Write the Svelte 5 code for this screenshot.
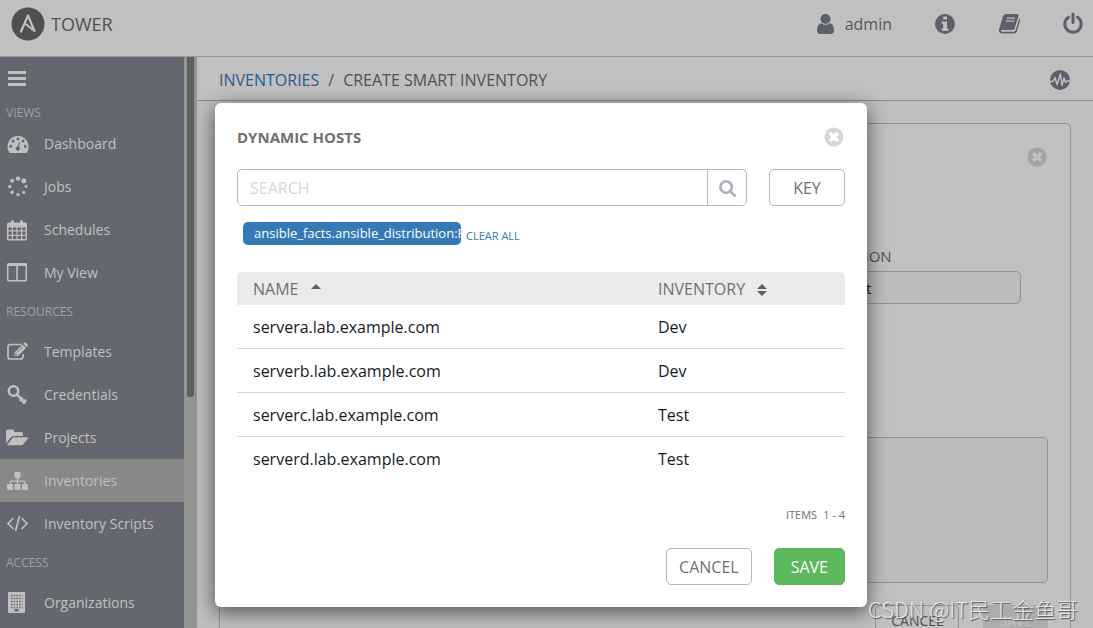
<script>
  const icons = {
    dashboard:
      '<path fill="currentColor" fill-rule="evenodd" d="M11 2A10.5 10.5 0 0 0 2.2 18.2Q2.5 19 3.4 19H18.6Q19.5 19 19.8 18.2A10.5 10.5 0 0 0 11 2ZM11 3.5a1.500 1.500 0 1 1 0 3a1.500 1.500 0 0 1 0-3ZM6 5.500a1.500 1.500 0 1 1 0 3a1.500 1.500 0 0 1 0-3ZM16 5.500a1.500 1.500 0 1 1 0 3a1.500 1.500 0 0 1 0-3ZM3.800 10.700a1.500 1.500 0 1 1 0 3a1.500 1.500 0 0 1 0-3ZM18.200 10.700a1.500 1.500 0 1 1 0 3a1.500 1.500 0 0 1 0-3ZM12 8L13 8.300L12 12.800A2.200 2.200 0 1 1 10.600 12.500Z"/>',
    jobs:
      '<g fill="currentColor"><circle cx="11" cy="1.6" r="2.2"/><circle cx="16.8" cy="3.8" r="2.5"/><circle cx="19" cy="9.5" r="1.4"/><circle cx="16.8" cy="15.3" r="1.6"/><circle cx="11" cy="17.6" r="1.7"/><circle cx="5.2" cy="15.3" r="1.8"/><circle cx="2.8" cy="9.5" r="1.7"/><circle cx="5.2" cy="3.800" r="2"/></g>',
    schedules:
      '<path fill="currentColor" fill-rule="evenodd" d="M2 2.500H4V1.500Q4 0 5.500 0T7 1.500V2.500H13V1.500Q13 0 14.500 0T16 1.500V2.500H18.500Q20 2.500 20 4V19Q20 20.500 18.500 20.500H1.500Q0 20.500 0 19V4Q0 2.500 2 2.500ZM1.500 7.500V10.200H4.800V7.500ZM6 7.500V10.200H9.400V7.500ZM10.600 7.500V10.200H14V7.500ZM15.200 7.500V10.200H18.500V7.500ZM1.500 11.500V14.700H4.800V11.500ZM6 11.500V14.700H9.400V11.500ZM10.600 11.500V14.700H14V11.500ZM15.200 11.500V14.700H18.500V11.500ZM1.500 16V19H4.800V16ZM6 16V19H9.400V16ZM10.600 16V19H14V16ZM15.200 16V19H18.500V16Z"/>',
    columns:
      '<path fill="currentColor" fill-rule="evenodd" d="M1.500 0H18.500Q20 0 20 1.500V17Q20 18.500 18.500 18.500H1.500Q0 18.500 0 17V1.500Q0 0 1.500 0ZM1.500 3V17H9.200V3ZM10.800 3V17H18.500V3Z"/>',
    templates:
      '<path fill="none" stroke="currentColor" stroke-width="1.700" d="M14.500 2.500H3.500Q1 2.500 1 5V14.500Q1 17 3.500 17H13.500Q16 17 16 14.500V12"/><path fill="currentColor" d="M7.500 10.500L15.500 2.500L19 6L11 14H7.500ZM16.300 1.700L17.500.700Q18.200.200 18.900.800L20.600 2.500Q21.200 3.200 20.600 4L19.800 5.200Z"/><path stroke="#64676f" stroke-width=".8" d="M10 10.500L15.500 5M8.700 11.500V12.800H10"/>',
    key:
      '<g fill="none" stroke="currentColor" stroke-width="2.600"><circle cx="6.500" cy="6" r="4.700"/><path d="M9.800 9.300L18.500 18M13 16L16 13M16 18.500L19 14.500"/></g>',
    folder:
      '<path fill="currentColor" d="M-1 15.500V3Q-1 1.500.500 1.500H5.500Q7 1.500 7 3V4H14.500Q16 4 16 5.500V8H7Q5 8 3.500 9.700ZM0 17.300L5 10.500Q6 9.300 7.500 9.300H20Q21.800 9.300 20.800 10.600L16.500 16Q15.400 17.300 14 17.300Z"/>',
    sitemap:
      '<path fill="currentColor" d="M8.500 1H12.500Q13.500 1 13.500 2V6Q13.500 7 12.500 7H11.300V9.500H17Q18.500 9.500 18.500 11V13H20Q21 13 21 14V18Q21 19 20 19H16Q15 19 15 18V14Q15 13 16 13H17.200V10.700H11.300V13H12.500Q13.500 13 13.500 14V18Q13.500 19 12.500 19H8.500Q7.500 19 7.500 18V14Q7.500 13 8.500 13H9.800V10.700H4V13H5Q6 13 6 14V18Q6 19 5 19H1Q0 19 0 18V14Q0 13 1 13H2.700V11Q2.700 9.500 4.200 9.500H9.800V7H8.500Q7.500 7 7.500 6V2Q7.500 1 8.500 1Z"/>',
    code:
      '<path fill="none" stroke="currentColor" stroke-width="1.700" d="M6.500 4L1 9.500L6.500 15M14.500 4L20 9.500L14.500 15M12.500 2L8.500 17"/>',
    building:
      '<path fill="currentColor" d="M2-1H17Q18-1 18 0V19Q18 20 17 20H2Q1 20 1 19V0Q1-1 2-1Z"/><path stroke="#64676f" stroke-width="1.400" stroke-dasharray="1.500 1.200" d="M4 2.500H15.500M4 5.500H15.500M4 8.500H15.500M4 11.500H15.500M4 14.500H15.500"/><path fill="#64676f" d="M7.500 16H11.500V18.500H7.500Z"/>',
    user:
      '<path fill="currentColor" d="M9.500 0A5 5 0 0 1 9.500 10A5 5 0 0 1 9.500 0ZM5.300 9.200Q9.500 12.300 13.700 9.200Q17.500 9.500 18 16Q18.200 19.500 15 20H4Q.800 19.500 1 16Q1.500 9.500 5.300 9.200Z"/>',
    info:
      '<circle cx="10" cy="10" r="10" fill="currentColor"/><path fill="#c0c0c0" d="M8.200 2.500H12V5.500H8.200ZM6.700 7.500H12V14.500H13.500V16.800H6.700V14.500H8.200V9.700H6.700Z"/>',
    book:
      '<path fill="currentColor" d="M7 0H18Q20 0 19.500 2L15.800 14Q15.300 16 13.500 16H3Q1.800 16 2 17Q2.200 17.700 3.300 17.700H15Q16.300 17.700 16.700 16.300L20.300 4.200Q21.500 5 21 6.500L18 17.300Q17.300 19.500 15 19.500H3Q-.400 19.300 0 15.500L4 2Q4.700 0 7 0Z"/><path stroke="#c0c0c0" stroke-width="1.300" d="M8 4.200H16M7 7.200H15"/>',
    power:
      '<g fill="none" stroke="currentColor" stroke-width="3" stroke-linecap="round"><path d="M5.500 3.300A8.200 8.200 0 1 0 14.500 3.300M10 0V8.500"/></g>',
    activity:
      '<circle cx="10" cy="10" r="10" fill="currentColor"/><path fill="none" stroke="#c0c0c0" stroke-width="1.400" stroke-linejoin="round" d="M0 11.500H3L5 7.500L7 14.500L10.500 4L12 15.500L14 8L15.500 12.500L17 11H20"/>',
    close:
      '<circle cx="10" cy="10" r="9.500" fill="currentColor"/><path stroke="var(--cross)" stroke-width="3.500" d="M6 6L14 14M14 6L6 14"/>',
    search:
      '<g fill="none" stroke="currentColor" stroke-width="3"><circle cx="9" cy="9" r="6.300"/><path stroke-linecap="round" d="M14 14L18.500 18.500"/></g>',
  };

  const groups = [
    {
      title: "Views",
      items: [
        { label: "Dashboard", icon: "dashboard" },
        { label: "Jobs", icon: "jobs" },
        { label: "Schedules", icon: "schedules" },
        { label: "My View", icon: "columns" },
      ],
    },
    {
      title: "Resources",
      items: [
        { label: "Templates", icon: "templates" },
        { label: "Credentials", icon: "key" },
        { label: "Projects", icon: "folder" },
        { label: "Inventories", icon: "sitemap", active: true },
        { label: "Inventory Scripts", icon: "code" },
      ],
    },
    {
      title: "Access",
      items: [{ label: "Organizations", icon: "building" }],
    },
  ];

  const hosts = [
    { name: "servera.lab.example.com", inventory: "Dev" },
    { name: "serverb.lab.example.com", inventory: "Dev" },
    { name: "serverc.lab.example.com", inventory: "Test" },
    { name: "serverd.lab.example.com", inventory: "Test" },
  ];

  let search = $state("");
  let organization = $state("Default");
</script>

{#snippet icon(name)}
  <svg class="icon" viewBox="-1 -1 22 22" aria-hidden="true">{@html icons[name]}</svg>
{/snippet}

<div class="app">
  <header>
    <a class="brand" href="#home">
      <svg viewBox="0 0 34 34" aria-hidden="true">
        <circle cx="17" cy="17" r="16.500" fill="#505050" />
        <path
          d="M10 24.500L17 8.500L23.500 24L14 16.500"
          fill="none"
          stroke="#c0c0c0"
          stroke-width="2.200"
          stroke-linejoin="round"
          stroke-linecap="round"
        />
      </svg>
      <span>TOWER</span>
    </a>
    <nav class="tools">
      <a class="user" href="#user">{@render icon("user")}<span>admin</span></a>
      <a href="#about" aria-label="About">{@render icon("info")}</a>
      <a href="#docs" aria-label="Documentation">{@render icon("book")}</a>
      <a href="#logout" aria-label="Log out">{@render icon("power")}</a>
    </nav>
  </header>

  <div class="body">
    <aside>
      <button class="menu" aria-label="Toggle menu">
        <span></span><span></span><span></span>
      </button>
      {#each groups as group}
        <h2>{group.title}</h2>
        <ul>
          {#each group.items as item}
            <li>
              <a href="#{item.icon}" class:active={item.active}>
                {@render icon(item.icon)}{item.label}
              </a>
            </li>
          {/each}
        </ul>
      {/each}
    </aside>
    <div class="track"><div class="thumb"></div></div>

    <main>
      <div class="breadcrumb">
        <a href="#inventories">INVENTORIES</a>
        <span class="slash">/</span>
        <span>CREATE SMART INVENTORY</span>
        <button class="stream" aria-label="Activity stream">{@render icon("activity")}</button>
      </div>

      <form class="card">
        <button type="button" class="close" aria-label="Close form">{@render icon("close")}</button>
        <div class="fields">
          <div class="field">
            <label for="organization">ORGANIZATION</label>
            <input id="organization" bind:value={organization} />
          </div>
        </div>
        <textarea aria-label="Variables"></textarea>
        <div class="actions">
          <button type="button" class="btn">CANCEL</button>
          <button type="button" class="btn save" disabled>SAVE</button>
        </div>
      </form>
    </main>
  </div>

  <div class="overlay">
    <div class="modal" role="dialog" aria-labelledby="modal-title">
      <div class="modal-head">
        <h1 id="modal-title">DYNAMIC HOSTS</h1>
        <button class="close" aria-label="Close">{@render icon("close")}</button>
      </div>

      <div class="search-row">
        <div class="search">
          <input placeholder="SEARCH" aria-label="Search" bind:value={search} />
          <button aria-label="Run search">{@render icon("search")}</button>
        </div>
        <button class="btn key">KEY</button>
      </div>

      <div class="tags">
        <span class="tag">ansible_facts.ansible_distribution:R</span>
        <a href="#clear">CLEAR ALL</a>
      </div>

      <table>
        <thead>
          <tr>
            <th>
              NAME
              <svg class="sort" viewBox="0 0 10 14" aria-hidden="true"><path d="M0 6L5 1L10 6Z" /></svg>
            </th>
            <th>
              INVENTORY
              <svg class="sort" viewBox="0 0 10 14" aria-hidden="true">
                <path d="M0 6L5 1L10 6ZM0 8H10L5 13Z" />
              </svg>
            </th>
          </tr>
        </thead>
        <tbody>
          {#each hosts as host}
            <tr>
              <td>{host.name}</td>
              <td>{host.inventory}</td>
            </tr>
          {/each}
        </tbody>
      </table>

      <p class="count"><span>ITEMS</span><span>1 - 4</span></p>

      <div class="modal-foot">
        <button class="btn">CANCEL</button>
        <button class="btn save">SAVE</button>
      </div>
    </div>
  </div>

  <div class="watermark">CSDN @IT民工金鱼哥</div>
</div>

<style>
  :global(body) {
    margin: 0;
  }

  * {
    box-sizing: border-box;
  }

  .app {
    position: relative;
    display: flex;
    flex-direction: column;
    height: 100vh;
    overflow: hidden;
    background: #bebebe;
    color: #505050;
    font-family: "Open Sans", "Noto Sans", sans-serif;
    font-size: 16px;
    line-height: 20px;
  }

  a {
    color: inherit;
    text-decoration: none;
  }

  button,
  input,
  textarea {
    font: inherit;
    color: inherit;
  }

  button {
    padding: 0;
    border: 0;
    background: none;
  }

  .icon {
    display: block;
    width: 22px;
    height: 22px;
    flex: none;
    overflow: visible;
  }

  header {
    display: flex;
    align-items: center;
    justify-content: space-between;
    flex: none;
    height: 57px;
    padding: 0 9px 8px 11px;
    border-bottom: 1px solid #989898;
    background: #c0c0c0;
  }

  .brand {
    display: flex;
    align-items: center;
    gap: 6px;
    font-size: 18px;
  }

  .brand svg {
    width: 34px;
    height: 34px;
  }

  .tools {
    display: flex;
    align-items: center;
    gap: 42px;
    color: #5d606a;
  }

  .user {
    display: flex;
    align-items: center;
    gap: 8px;
  }

  .user span {
    color: #585858;
  }

  .body {
    display: flex;
    flex: 1;
    min-height: 0;
  }

  aside {
    flex: none;
    width: 184px;
    overflow: hidden;
    background: #64676f;
    color: #c0c0c0;
    font-size: 14px;
  }

  .menu {
    display: flex;
    flex-direction: column;
    gap: 3px;
    height: 46px;
    padding: 14px 8px;
  }

  .menu span {
    width: 18px;
    height: 3px;
    background: #c0c0c0;
  }

  aside h2 {
    margin: 0;
    padding-left: 6px;
    color: #a0a1a3;
    font-size: 12px;
    font-weight: 400;
    line-height: 36px;
    text-transform: uppercase;
  }

  .menu + h2 {
    line-height: 19px;
  }

  ul {
    margin: 0;
    padding: 0;
    list-style: none;
  }

  li a {
    display: flex;
    align-items: center;
    gap: 16px;
    height: 43px;
    padding-left: 6px;
  }

  li a.active {
    background: #888;
  }

  .track {
    flex: none;
    width: 13px;
    padding-left: 3px;
    background: #929592;
  }

  .thumb {
    width: 7px;
    height: 340px;
    border-radius: 0 0 3px 3px;
    background: #5b6060;
  }

  main {
    flex: 1;
    min-width: 0;
  }

  .breadcrumb {
    display: flex;
    align-items: center;
    height: 44px;
    padding: 2px 22px 0;
    border-bottom: 1px solid #8a8a8a;
    background: #c0c0c0;
  }

  .breadcrumb a {
    color: #285d8a;
  }

  .slash {
    padding: 0 9px;
  }

  .stream {
    margin-left: auto;
    color: #5d606a;
  }

  .card {
    display: flex;
    flex-direction: column;
    margin: 22px 22px 0;
    padding: 22px;
    border: 1px solid #929292;
    border-radius: 5px;
    background: #c0c0c0;
  }

  .close {
    --cross: #c0c0c0;
    align-self: flex-end;
    color: #a3a3a3;
  }

  .fields {
    display: grid;
    grid-template-columns: repeat(3, 1fr);
    gap: 30px;
    margin: 78px 27px 133px 0;
  }

  .field {
    display: flex;
    flex-direction: column;
    grid-column: 3;
    gap: 5px;
    font-size: 15px;
  }

  .field input {
    width: 100%;
    height: 33px;
    padding: 0 12px 0 38px;
    border: 1px solid #929292;
    border-radius: 5px;
    background: #bcbcbc;
    color: #222;
  }

  textarea {
    width: 100%;
    height: 146px;
    border: 1px solid #929292;
    border-radius: 5px;
    background: #bcbcbc;
    resize: none;
  }

  .btn {
    height: 37px;
    padding: 0 12px;
    border: 1px solid #b7b7b7;
    border-radius: 5px;
    color: #707070;
  }

  .btn.save {
    padding: 0 16px;
    border-color: #5cb85c;
    background: #5cb85c;
    color: #fff;
  }

  .actions {
    display: flex;
    justify-content: flex-end;
    gap: 24px;
    margin-top: 22px;
    font-size: 14px;
  }

  .actions .btn {
    height: 31px;
    padding: 0 15px;
    border-color: #929292;
    color: #505050;
  }

  .actions .btn.save {
    border-color: #acacac;
    background: #acacac;
    color: #c0c0c0;
  }

  .overlay {
    position: absolute;
    inset: 0;
    display: flex;
    align-items: flex-start;
    justify-content: center;
    padding: 103px 11px 0 0;
  }

  .modal {
    width: 652px;
    max-width: 100%;
    padding: 22px;
    border-radius: 6px;
    background: #fff;
    box-shadow: 0 5px 20px rgba(0, 0, 0, 0.6);
  }

  .modal-head {
    display: flex;
    align-items: center;
    justify-content: space-between;
    height: 23px;
  }

  h1 {
    margin: 0;
    color: #707070;
    font-size: 15px;
    font-weight: 700;
  }

  .modal .close {
    --cross: #fff;
    color: #d7d7d7;
  }

  .search-row {
    display: flex;
    gap: 22px;
    margin-top: 21px;
  }

  .search {
    display: flex;
    flex: 1;
    height: 37px;
    border: 1px solid #b7b7b7;
    border-radius: 5px;
  }

  .search input {
    flex: 1;
    min-width: 0;
    padding: 0 12px;
    border: 0;
    background: none;
    outline: 0;
  }

  .search input::placeholder {
    color: #d7d7d7;
  }

  .search button {
    display: flex;
    align-items: center;
    justify-content: center;
    width: 39px;
    border-left: 1px solid #b7b7b7;
    color: #afb2bb;
  }

  .search .icon {
    width: 20px;
    height: 20px;
  }

  .key {
    width: 76px;
  }

  .tags {
    display: flex;
    align-items: flex-end;
    gap: 5px;
    margin: 16px 0 27px;
    padding-left: 6px;
  }

  .tag {
    width: 218px;
    height: 23px;
    padding-left: 11px;
    overflow: hidden;
    border-radius: 5px;
    background: #337ab7;
    color: #fff;
    font-size: 13px;
    line-height: 23px;
    white-space: nowrap;
  }

  .tags a {
    color: #337ab7;
    font-size: 11px;
    line-height: 18px;
  }

  table {
    width: 100%;
    border-collapse: separate;
    border-spacing: 0;
    table-layout: fixed;
  }

  th,
  td {
    padding: 0 16px;
    text-align: left;
  }

  th {
    height: 33px;
    background: #ebebeb;
    color: #707070;
    font-weight: 400;
  }

  th:first-child {
    width: 405px;
    border-top-left-radius: 5px;
  }

  th:last-child {
    border-top-right-radius: 5px;
  }

  .sort {
    width: 10px;
    height: 14px;
    margin-left: 8px;
    vertical-align: -2px;
    fill: #606060;
  }

  td {
    height: 44px;
    border-bottom: 1px solid #d7d7d7;
    color: #161b1f;
  }

  tr:last-child td {
    border-bottom: 0;
  }

  .count {
    display: flex;
    justify-content: flex-end;
    gap: 6px;
    margin: 24px 0 23px;
    color: #707070;
    font-size: 11px;
  }

  .modal-foot {
    display: flex;
    justify-content: flex-end;
    gap: 22px;
  }

  .watermark {
    position: absolute;
    right: 15px;
    bottom: 6px;
    color: #e6e6e6;
    font-family: "Noto Sans CJK SC", sans-serif;
    font-size: 22px;
    font-weight: 300;
    line-height: 28px;
    text-shadow: 1px 1px 1px #555;
  }
</style>
